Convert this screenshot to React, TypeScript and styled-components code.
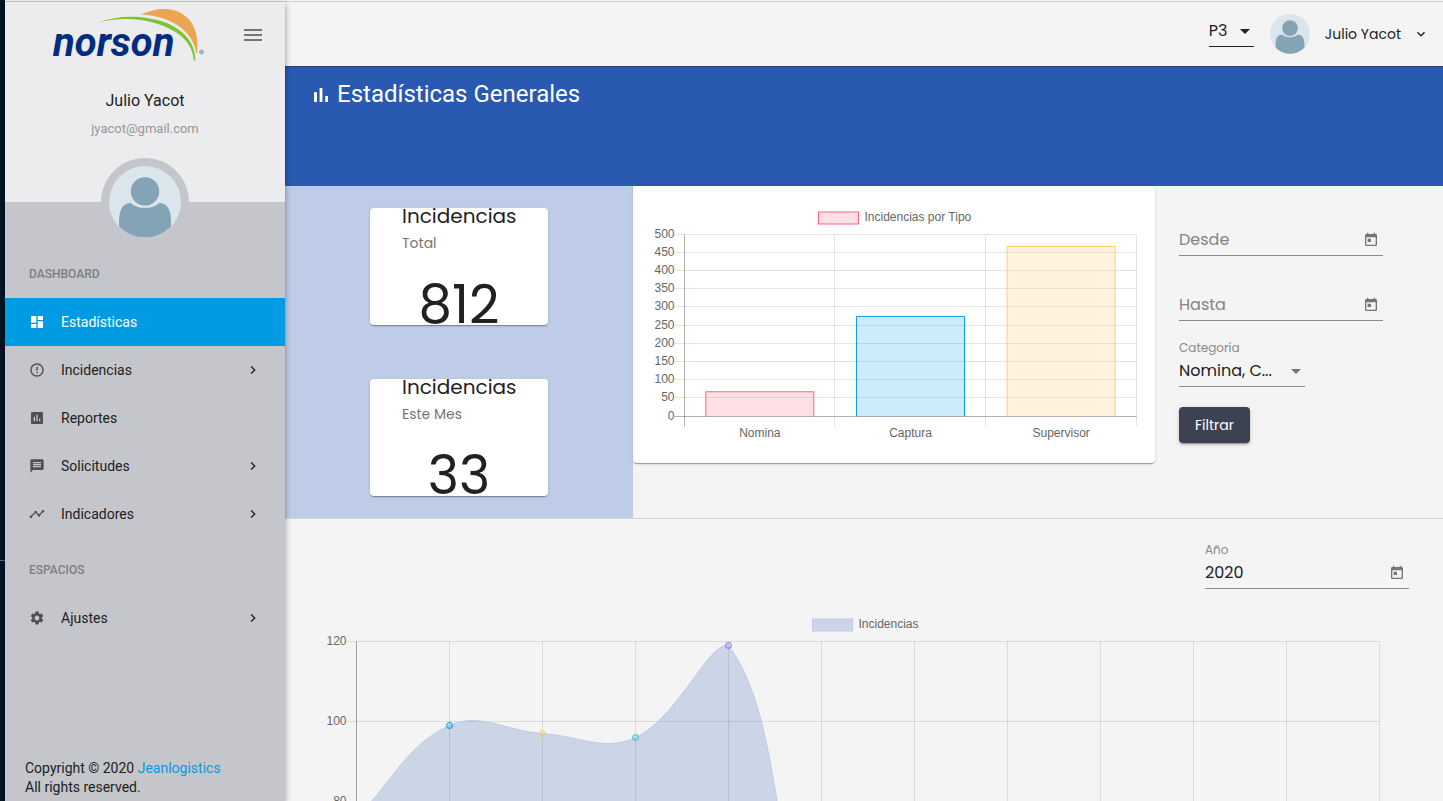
import React from "react";
import styled, { createGlobalStyle, css } from "styled-components";
import {
  MdArrowDropDown,
  MdAssessment,
  MdChevronRight,
  MdDashboard,
  MdErrorOutline,
  MdExpandMore,
  MdMenu,
  MdMessage,
  MdSettings,
  MdTimeline,
  MdToday,
} from "react-icons/md";

const roboto = `Roboto, "Liberation Sans", sans-serif`;
const poppins = `Poppins, Inter, "Open Sans", sans-serif`;
const chartFont = `"Liberation Sans", Arial, sans-serif`;

const GlobalStyle = createGlobalStyle`
  *, *::before, *::after { box-sizing: border-box; }
  body {
    margin: 0;
    background: #f4f4f4;
    color: #212121;
    font-family: ${poppins};
    font-size: 14px;
  }
  h1, h2, p, ul { margin: 0; padding: 0; font-weight: 400; }
  ul { list-style: none; }
  button, input, select { font: inherit; color: inherit; border: 0; background: none; padding: 0; margin: 0; outline: 0; }
  a { text-decoration: none; color: inherit; }
  svg { display: block; flex-shrink: 0; }
`;

/* ---------- Shell ---------- */

const Shell = styled.div`
  display: flex;
  height: 100vh;
  overflow: hidden;
`;

const Rail = styled.div`
  flex: 0 0 5px;
  background: #001526;
  display: flex;
  flex-direction: column;
  &::before {
    content: "";
    flex: 0 0 560px;
  }
  &::after {
    content: "";
    height: 1px;
    background: #4b7593;
  }
`;

const Window = styled.div`
  flex: 1;
  min-width: 0;
  display: flex;
  flex-direction: column;
`;

const TopEdge = styled.div`
  flex: 0 0 2px;
  background: #f4f4f2;
  border-bottom: 1px solid #cfd0cc;
`;

const Body = styled.div`
  flex: 1;
  min-height: 0;
  display: flex;
`;

/* ---------- Sidebar ---------- */

const Sidebar = styled.aside`
  position: relative;
  z-index: 1;
  flex: 0 0 280px;
  display: flex;
  flex-direction: column;
  background: #c5c6cb;
  font-family: ${roboto};
  box-shadow: 0 2px 6px rgba(0, 0, 0, 0.4);
`;

const Profile = styled.header`
  height: 200px;
  background: #ececee;
  text-align: center;
`;

const BrandRow = styled.div`
  display: flex;
  align-items: center;
  justify-content: space-between;
  height: 66px;
  padding: 0 20px 0 44px;
`;

const IconButton = styled.button`
  display: flex;
  color: #757575;
  cursor: pointer;
`;

const ProfileName = styled.p`
  margin-top: 23px;
  font-size: 16px;
  line-height: 20px;
`;

const ProfileMail = styled.p`
  margin-top: 8px;
  font-size: 13px;
  line-height: 20px;
  color: #969697;
`;

const AvatarRing = styled.div`
  align-self: center;
  margin-top: -44px;
  padding: 8px;
  border-radius: 50%;
  background: #c5c6cb;
`;

const Nav = styled.nav`
  padding-top: 4px;
`;

const NavGroup = styled.section`
  padding-bottom: 8px;
`;

const NavHeading = styled.h2`
  padding-left: 24px;
  font-size: 12px;
  font-weight: 500;
  line-height: 48px;
  color: #7d7e81;
`;

const NavLink = styled.a<{ $active?: boolean }>`
  display: flex;
  align-items: center;
  gap: 16px;
  height: 48px;
  padding: 0 24px;
  font-size: 14px;
  color: ${(p) => (p.$active ? "#fff" : "#212121")};
  background: ${(p) => (p.$active ? "#009be3" : "transparent")};
  > svg:first-child {
    color: ${(p) => (p.$active ? "#fff" : "#4f5052")};
  }
`;

const NavText = styled.span`
  flex: 1;
`;

const SideFooter = styled.footer`
  margin-top: auto;
  padding: 0 20px 4px;
  font-size: 14px;
  line-height: 19px;
  a {
    color: #039be5;
  }
`;

/* ---------- Main column ---------- */

const Main = styled.main`
  flex: 1;
  min-width: 0;
  overflow-y: auto;
  scrollbar-width: none;
`;

const Toolbar = styled.header`
  display: flex;
  align-items: center;
  justify-content: flex-end;
  height: 64px;
  padding: 0 14px 0 24px;
`;

const PlantSelect = styled.div`
  display: flex;
  align-items: center;
  width: 45px;
  height: 32px;
  margin: 0 16px 6px 0;
  border-bottom: 1px solid #212121;
`;

const Select = styled.select`
  flex: 1;
  min-width: 0;
  appearance: none;
  font-size: 16px;
  line-height: 24px;
  text-overflow: ellipsis;
  cursor: pointer;
`;

const SelectArrow = styled(MdArrowDropDown).attrs({ size: 24, "aria-hidden": true })`
  margin-right: -3px;
  pointer-events: none;
`;

const UserButton = styled.button`
  display: flex;
  align-items: center;
  font-size: 14px;
  cursor: pointer;
`;

const UserName = styled.span`
  margin: 0 12px 0 15px;
`;

const Hero = styled.div`
  display: flex;
  align-items: flex-start;
  gap: 4px;
  height: 120px;
  padding: 16px 24px;
  background: #2959b1;
  box-shadow: inset 0 1px 0 #1c3f7e;
  color: #fff;
  font-family: ${roboto};
`;

const HeroTitle = styled.h1`
  font-size: 24px;
  line-height: 24px;
`;

const Overview = styled.section`
  display: grid;
  grid-template-columns: 58fr 87fr 48fr;
  align-items: start;
  border-bottom: 1px solid #d6d6d6;
`;

const Totals = styled.div`
  display: flex;
  flex-direction: column;
  align-items: center;
  gap: 54px;
  padding: 22px 0;
  background: #bfcce7;
`;

const cardShadow = css`
  box-shadow: 0 2px 1px -1px rgba(0, 0, 0, 0.2), 0 1px 1px rgba(0, 0, 0, 0.14), 0 1px 3px rgba(0, 0, 0, 0.12);
`;

const TotalCard = styled.article`
  width: 178px;
  height: 117px;
  border-radius: 4px;
  background: #fff;
  ${cardShadow}
`;

const TotalTitle = styled.h2`
  padding-left: 32px;
  font-size: 20px;
  line-height: 16px;
`;

const TotalPeriod = styled.p`
  margin-top: 8px;
  padding-left: 32px;
  font-size: 14px;
  line-height: 22px;
  color: #757575;
`;

const TotalValue = styled.p`
  margin-top: 23px;
  font-size: 53px;
  line-height: 56px;
  text-align: center;
`;

const ChartCard = styled.article`
  padding: 16px;
  border-radius: 4px;
  background: #fff;
  ${cardShadow}
`;

const Filters = styled.form`
  display: flex;
  flex-direction: column;
  align-items: flex-start;
  padding: 5px 24px 0;
`;

const FieldBox = styled.div<{ $narrow?: boolean }>`
  display: flex;
  flex-direction: column;
  justify-content: flex-end;
  width: ${(p) => (p.$narrow ? 126 : 204)}px;
  height: ${(p) => (p.$narrow ? 66 : 65)}px;
`;

const FieldLabel = styled.label`
  font-size: 12px;
  line-height: 16px;
  color: #8a8a8a;
`;

const Control = styled.div`
  display: flex;
  align-items: center;
  height: 31px;
  border-bottom: 1px solid #8c8c8c;
  svg {
    color: #757575;
  }
`;

const TextInput = styled.input`
  flex: 1;
  min-width: 0;
  font-size: 16px;
  line-height: 24px;
  &::placeholder {
    color: #848484;
    opacity: 1;
  }
`;

const PickerButton = styled(IconButton)`
  margin-right: 4px;
`;

const FilterButton = styled.button`
  width: 71px;
  height: 36px;
  margin-top: 20px;
  border-radius: 4px;
  background: #3c4252;
  color: #fff;
  font-size: 14px;
  cursor: pointer;
  box-shadow: 0 3px 1px -2px rgba(0, 0, 0, 0.2), 0 2px 2px rgba(0, 0, 0, 0.14), 0 1px 5px rgba(0, 0, 0, 0.12);
`;

const Yearly = styled.section`
  padding: 5px 24px 24px;
`;

const YearRow = styled.div`
  display: flex;
  justify-content: flex-end;
  padding-right: 10px;
`;

const ChartSvg = styled.svg`
  width: 100%;
  height: auto;
  overflow: visible;
  font-family: ${chartFont};
  font-size: 12px;
  fill: #666;
`;

const YearlyChart = styled(ChartSvg)`
  margin-top: 23px;
`;

const LogoSvg = styled.svg`
  overflow: visible;
`;

/* ---------- Drawings ---------- */

function Avatar({ size }: { size: number }) {
  const clip = `face-${size}`;
  return (
    <svg width={size} height={size} viewBox="0 0 72 72" role="img" aria-label="Julio Yacot">
      <clipPath id={clip}>
        <circle cx="36" cy="36" r="35.6" />
      </clipPath>
      <circle cx="36" cy="36" r="36" fill="#dbe6ec" />
      <g clipPath={`url(#${clip})`} fill="#84a4b6">
        <circle cx="36" cy="25.4" r="14.2" />
        <path d="M22 37C28 43.600 44 43.600 50 37C58 37 62 43 62 56V72H10V56C10 43 14 37 22 37Z" />
      </g>
    </svg>
  );
}

function Logo() {
  return (
    <LogoSvg width="160" height="58" viewBox="0 0 160 58" role="img" aria-label="norson">
      <path d="M92 8.500C110 0 131 0.500 142 16C148 25 149 35 148.200 47H147.200C146 39 142 30 133 22.500C122 13.500 108 9.500 92 8.500Z" fill="#e9a553" />
      <path d="M49 16.500C70 8.500 95 9 115 16C133 23 146 35 146.500 54.500H144.700C144 45 141 38 132 30C117 17.500 84 7.500 49 16.500Z" fill="#7cc52e" />
      <text x="4" y="50" fill="#002d82" fontFamily="Roboto, sans-serif" fontSize="40" fontStyle="italic" fontWeight="700">
        norson
      </text>
      <circle cx="152.500" cy="46" r="1.900" fill="none" stroke="#6478ab" strokeWidth="0.700" />
      <path d="M152 47V45H152.900V46H152M152.600 46L153.300 47" fill="none" stroke="#6478ab" strokeWidth="0.500" />
    </LogoSvg>
  );
}

function BarsIcon() {
  return (
    <svg width="24" height="24" viewBox="0 0 24 24" fill="currentColor" aria-hidden="true">
      <path d="M5 10.200h3V20H5zM10.600 6h2.800v14h-2.800zM16.200 14H19v6h-2.800z" />
    </svg>
  );
}

type Bar = { label: string; value: number; stroke: string; fill: string };

const bars: Bar[] = [
  { label: "Nomina", value: 68, stroke: "#ff6384", fill: "rgba(255,99,132,.2)" },
  { label: "Captura", value: 275, stroke: "#039be5", fill: "rgba(3,155,229,.2)" },
  { label: "Supervisor", value: 467, stroke: "#ffcf66", fill: "rgba(255,193,102,.2)" },
];

const crisp = (n: number) => Math.floor(n - 0.5) + 0.5;

function TypeChart() {
  const left = 35.5;
  const right = 487.5;
  const top = 32.5;
  const bottom = 214.5;
  const slot = (right - left) / bars.length;
  const y = (v: number) => bottom - ((bottom - top) * v) / 500;
  const ticks = Array.from({ length: 11 }, (_, i) => i * 50);
  return (
    <ChartSvg viewBox="0 0 490 245" role="img" aria-label="Incidencias por Tipo">
      <rect x="169.500" y="10" width="40" height="12" fill="rgba(255,99,132,.2)" stroke="#ff6384" />
      <text x="215.500" y="19">Incidencias por Tipo</text>
      {ticks.map((t) => (
        <g key={t}>
          <path d={`M${left - 10} ${crisp(y(t))}H${right}`} stroke={t ? "rgba(0,0,0,.1)" : "rgba(0,0,0,.3)"} />
          <text x={left - 10} y={y(t) + 3} textAnchor="end">{t}</text>
        </g>
      ))}
      {[0, 1, 2, 3].map((i) => (
        <path key={i} d={`M${crisp(left + i * slot)} ${top}V${bottom + 10}`} stroke={i ? "rgba(0,0,0,.1)" : "rgba(0,0,0,.3)"} />
      ))}
      {bars.map((b, i) => {
        const x = left + i * slot + 21.3;
        return (
          <g key={b.label}>
            <path d={`M${x} ${bottom}V${y(b.value)}H${x + 108}V${bottom}`} fill={b.fill} stroke={b.stroke} />
            <text x={left + (i + 0.5) * slot} y="235" textAnchor="middle">{b.label}</text>
          </g>
        );
      })}
    </ChartSvg>
  );
}

const monthly = [76, 99, 97, 96, 119, 33, 0, 0, 0, 0, 0, 0];
const dotColours = ["#ff6384", "#039be5", "#ffcd56", "#36c5c0", "#9966ff", "#c9cbcf"];

type Point = { x: number; y: number };

/* Cardinal-style spline whose control points are kept inside the plot area. */
function splinePath(points: Point[], tension: number, top: number, bottom: number) {
  const clamp = (v: number) => Math.min(bottom, Math.max(top, v));
  const handles = points.map((p, i) => {
    const prev = points[Math.max(0, i - 1)];
    const next = points[Math.min(points.length - 1, i + 1)];
    const d01 = Math.hypot(p.x - prev.x, p.y - prev.y);
    const d12 = Math.hypot(next.x - p.x, next.y - p.y);
    const fa = (tension * d01) / (d01 + d12);
    const fb = (tension * d12) / (d01 + d12);
    return {
      before: { x: p.x - fa * (next.x - prev.x), y: clamp(p.y - fa * (next.y - prev.y)) },
      after: { x: p.x + fb * (next.x - prev.x), y: clamp(p.y + fb * (next.y - prev.y)) },
    };
  });
  return points.reduce((d, p, i) => {
    if (i === 0) return `M${p.x} ${p.y}`;
    const a = handles[i - 1].after;
    const b = handles[i].before;
    return `${d}C${a.x} ${a.y} ${b.x} ${b.y} ${p.x} ${p.y}`;
  }, "");
}

function MonthChart() {
  const left = 47.5;
  const step = 93;
  const right = left + 11 * step;
  const top = 29.5;
  const bottom = 509.5;
  const y = (v: number) => bottom - v * 4;
  const points = monthly.map((v, i) => ({ x: left + i * step, y: y(v) }));
  const line = splinePath(points, 0.4, top, bottom);
  return (
    <YearlyChart viewBox="0 0 1110 530" role="img" aria-label="Incidencias por mes">
      <rect x="503.500" y="7" width="40" height="12" fill="rgba(41,89,177,.2)" stroke="#bfcce7" />
      <text x="549.500" y="16">Incidencias</text>
      {[0, 20, 40, 60, 80, 100, 120].map((t) => (
        <g key={t}>
          <path d={`M${left - 10} ${y(t)}H${right}`} stroke="rgba(0,0,0,.1)" />
          <text x={left - 10} y={y(t) + 3} textAnchor="end">{t}</text>
        </g>
      ))}
      {points.map((p, i) => (
        <path key={p.x} d={`M${p.x} ${top}V${bottom + 10}`} stroke={i ? "rgba(0,0,0,.1)" : "rgba(0,0,0,.35)"} />
      ))}
      <path d={`${line}V${bottom}H${left}Z`} fill="rgba(41,89,177,.2)" />
      <path d={line} fill="none" stroke="#bfcce7" />
      {points.slice(0, 6).map((p, i) => (
        <circle key={p.x} cx={p.x} cy={p.y} r="3" fill={dotColours[i]} fillOpacity="0.200" stroke={dotColours[i]} />
      ))}
    </YearlyChart>
  );
}

/* ---------- Page parts ---------- */

type Item = { label: string; icon: React.ReactNode; active?: boolean; nested?: boolean };

const groups: { title: string; items: Item[] }[] = [
  {
    title: "DASHBOARD",
    items: [
      { label: "Estadísticas", icon: <MdDashboard size={16} />, active: true },
      { label: "Incidencias", icon: <MdErrorOutline size={16} />, nested: true },
      { label: "Reportes", icon: <MdAssessment size={16} /> },
      { label: "Solicitudes", icon: <MdMessage size={16} />, nested: true },
      { label: "Indicadores", icon: <MdTimeline size={16} />, nested: true },
    ],
  },
  { title: "ESPACIOS", items: [{ label: "Ajustes", icon: <MdSettings size={16} />, nested: true }] },
];

function Total({ period, value }: { period: string; value: number }) {
  return (
    <TotalCard>
      <TotalTitle>Incidencias</TotalTitle>
      <TotalPeriod>{period}</TotalPeriod>
      <TotalValue>{value}</TotalValue>
    </TotalCard>
  );
}

function DateField({ id, name, label, value }: { id: string; name: string; label?: string; value?: string }) {
  return (
    <FieldBox>
      {label && <FieldLabel htmlFor={id}>{label}</FieldLabel>}
      <Control>
        <TextInput id={id} type="text" placeholder={name} aria-label={name} defaultValue={value} />
        <PickerButton type="button" aria-label={`Abrir calendario: ${name}`}>
          <MdToday size={16} />
        </PickerButton>
      </Control>
    </FieldBox>
  );
}

export default function App() {
  return (
    <Shell>
      <GlobalStyle />
      <Rail />
      <Window>
        <TopEdge />
        <Body>
          <Sidebar>
            <Profile>
              <BrandRow>
                <Logo />
                <IconButton type="button" aria-label="Menú">
                  <MdMenu size={24} />
                </IconButton>
              </BrandRow>
              <ProfileName>Julio Yacot</ProfileName>
              <ProfileMail>jyacot@gmail.com</ProfileMail>
            </Profile>
            <AvatarRing>
              <Avatar size={72} />
            </AvatarRing>
            <Nav>
              {groups.map((g) => (
                <NavGroup key={g.title}>
                  <NavHeading>{g.title}</NavHeading>
                  <ul>
                    {g.items.map((item) => (
                      <li key={item.label}>
                        <NavLink href="#" $active={item.active}>
                          {item.icon}
                          <NavText>{item.label}</NavText>
                          {item.nested && <MdChevronRight size={16} />}
                        </NavLink>
                      </li>
                    ))}
                  </ul>
                </NavGroup>
              ))}
            </Nav>
            <SideFooter>
              <p>
                Copyright © 2020 <a href="#">Jeanlogistics</a>
              </p>
              <p>All rights reserved.</p>
            </SideFooter>
          </Sidebar>

          <Main>
            <Toolbar>
              <PlantSelect>
                <Select aria-label="Planta" defaultValue="P3">
                  <option>P3</option>
                </Select>
                <SelectArrow />
              </PlantSelect>
              <UserButton type="button">
                <Avatar size={40} />
                <UserName>Julio Yacot</UserName>
                <MdExpandMore size={16} />
              </UserButton>
            </Toolbar>

            <Hero>
              <BarsIcon />
              <HeroTitle>Estadísticas Generales</HeroTitle>
            </Hero>

            <Overview>
              <Totals>
                <Total period="Total" value={812} />
                <Total period="Este Mes" value={33} />
              </Totals>
              <ChartCard>
                <TypeChart />
              </ChartCard>
              <Filters>
                <DateField id="desde" name="Desde" />
                <DateField id="hasta" name="Hasta" />
                <FieldBox $narrow>
                  <FieldLabel htmlFor="categoria">Categoría</FieldLabel>
                  <Control>
                    <Select id="categoria" defaultValue="Nomina, C...">
                      <option>Nomina, C...</option>
                    </Select>
                    <SelectArrow />
                  </Control>
                </FieldBox>
                <FilterButton type="button">Filtrar</FilterButton>
              </Filters>
            </Overview>

            <Yearly>
              <YearRow>
                <DateField id="anio" name="Año" label="Año" value="2020" />
              </YearRow>
              <MonthChart />
            </Yearly>
          </Main>
        </Body>
      </Window>
    </Shell>
  );
}
